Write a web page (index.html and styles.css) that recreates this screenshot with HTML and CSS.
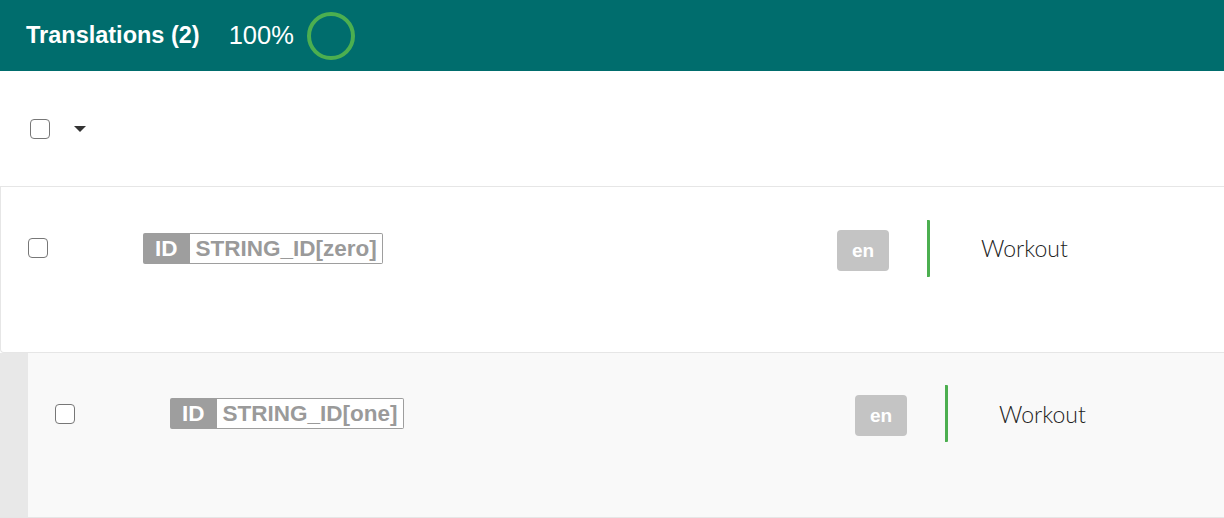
FILE: index.html
```html
<!DOCTYPE html>
<html lang="en">
  <head>
    <meta charset="UTF-8" />
    <meta name="viewport" content="width=device-width, initial-scale=1.0" />
    <title>Translations</title>
    <link rel="stylesheet" href="styles.css">
  </head>
  <body>
    <div class="header">
      <span class="titulo">Translations (2)</span>
      <span class="percent">100%</span>
      <svg class="progress" width="52" height="52" viewBox="0 0 52 52">
        <circle cx="26" cy="26" r="22" fill="none" stroke="#4caf50" stroke-width="4" />
      </svg>
    </div>

    <div class="toolbar">
      <span class="check"></span>
      <span class="caret"></span>
    </div>

    <div class="row">
      <div class="cell-check"><span class="check"></span></div>
      <div class="cell-key">
        <span class="key-label">ID</span><span class="key-name">STRING_ID[zero]</span>
      </div>
      <div class="cell-lang"><span class="lang">en</span></div>
      <div class="cell-text">Workout</div>
    </div>

    <div class="row row-sub">
      <div class="indent"></div>
      <div class="row-body">
        <div class="cell-check"><span class="check"></span></div>
        <div class="cell-key">
          <span class="key-label">ID</span><span class="key-name">STRING_ID[one]</span>
        </div>
        <div class="cell-lang"><span class="lang">en</span></div>
        <div class="cell-text">Workout</div>
      </div>
    </div>
  </body>
</html>
```

FILE: styles.css
```css
body {
  margin: 0;
  font-family: "Liberation Sans", Arial, sans-serif;
  background-color: #ffffff;
}

.header {
  background-color: #006d6d;
  height: 71px;
  display: flex;
  align-items: center;
  padding-left: 26px;
  color: #ffffff;
}

.titulo {
  font-weight: bold;
  font-size: 23.5px;
}

.percent {
  font-size: 25.5px;
  margin-left: 29px;
}

.progress {
  margin-left: 11px;
}

.toolbar {
  height: 115px;
  display: flex;
  align-items: center;
  padding-left: 30px;
  border-bottom: 1px solid #e6e6e6;
}

.check {
  display: block;
  width: 18px;
  height: 18px;
  border: 1.5px solid #777777;
  border-radius: 4px;
  background-color: #ffffff;
}

.caret {
  margin-left: 24px;
  width: 0;
  height: 0;
  border-left: 6px solid transparent;
  border-right: 6px solid transparent;
  border-top: 6px solid #333333;
}

.row {
  display: flex;
  align-items: center;
  height: 166px;
  box-sizing: border-box;
  padding-bottom: 43px;
  border-left: 1px solid #e6e6e6;
  border-bottom: 1px solid #e6e6e6;
  border-bottom-left-radius: 4px;
}

.cell-check {
  width: 142px;
  padding-left: 27px;
  box-sizing: border-box;
}

.cell-key {
  display: flex;
  width: 694px;
}

.key-label {
  background-color: #9e9e9e;
  color: #ffffff;
  font-weight: bold;
  font-size: 22.5px;
  padding: 3px 12px 0 12px;
  height: 28px;
  border-radius: 2px 0 0 2px;
}

.key-name {
  color: #9a9a9a;
  font-weight: bold;
  font-size: 22.5px;
  border: 1px solid #9e9e9e;
  border-left: none;
  padding: 2px 5px 0 6px;
  height: 27px;
  border-radius: 0 2px 2px 0;
  background-color: #ffffff;
}

.cell-lang {
  width: 90px;
  height: 57px;
  border-right: 3px solid #4caf50;
  border-radius: 1px;
  display: flex;
  align-items: center;
}

.lang {
  margin-top: 4px;
  background-color: #c4c4c4;
  color: #ffffff;
  font-weight: bold;
  font-size: 19px;
  width: 52px;
  height: 41px;
  line-height: 42px;
  text-align: center;
  border-radius: 4px;
}

.cell-text {
  padding-left: 51px;
  font-family: Lato, "Open Sans", sans-serif;
  font-weight: 300;
  font-size: 23px;
  color: #222222;
}

.row-sub {
  height: 165px;
  border-left: none;
  border-radius: 0;
  align-items: stretch;
  padding-bottom: 0;
}

.indent {
  width: 28px;
  background-color: #e8e8e8;
}

.row-body {
  flex: 1;
  display: flex;
  align-items: center;
  padding-bottom: 43px;
  background-color: #f9f9f9;
}

.row-body .cell-key {
  width: 685px;
}
```
